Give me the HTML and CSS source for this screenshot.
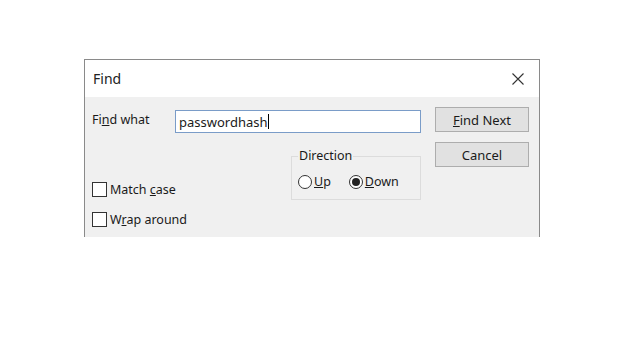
FILE: index.html
```html
<!DOCTYPE html>
<html>
<head>
<meta charset="utf-8">
<link rel="stylesheet" href="styles.css">
</head>
<body>
<div class="dialog">
  <div class="titlebar">
    <span class="title">Find</span>
    <svg class="close" width="12" height="12" viewBox="0 0 12 12"><path d="M0.5 0.5 L11.5 11.5 M11.5 0.5 L0.5 11.5" stroke="#333" stroke-width="1.1" fill="none"/></svg>
  </div>
  <div class="content">
    <div class="left">
      <div class="findrow">
        <label class="findlabel">Fi<u>n</u>d what</label>
        <div class="input"><span>passwordhash</span><span class="caret"></span></div>
      </div>
      <div class="lower">
        <div class="checks">
          <div class="check"><span class="box"></span><span>Match <u>c</u>ase</span></div>
          <div class="check"><span class="box"></span><span>W<u>r</u>ap around</span></div>
        </div>
        <fieldset class="group">
          <legend>Direction</legend>
          <div class="radios">
            <div class="radio"><span class="circle"></span><span><u>U</u>p</span></div>
            <div class="radio"><span class="circle on"></span><span><u>D</u>own</span></div>
          </div>
        </fieldset>
      </div>
    </div>
    <div class="buttons">
      <div class="btn"><u>F</u>ind Next</div>
      <div class="btn">Cancel</div>
    </div>
  </div>
</div>
</body>
</html>
```

FILE: styles.css
```css
html, body {
  margin: 0;
  padding: 0;
  background: #fff;
}
body {
  font-family: "Noto Sans", "Open Sans", sans-serif;
  font-size: 12.5px;
  color: #1a1a1a;
}
.dialog {
  margin: 59px 0 0 84px;
  width: 454px;
  border: 1px solid #8a8a8a;
  border-bottom: none;
}
.titlebar {
  height: 37px;
  background: #fff;
  display: flex;
  align-items: center;
  justify-content: space-between;
  padding: 0 15px 0 8px;
}
.title {
  font-size: 14px;
  color: #222;
}
.close {
  display: block;
}
.content {
  height: 140px;
  background: #f0f0f0;
  box-sizing: border-box;
  padding: 10px 0 0 7px;
  display: flex;
  gap: 14px;
  overflow: hidden;
}
.left {
  width: 329px;
}
.findrow {
  display: flex;
  align-items: flex-start;
  height: 26px;
}
.findlabel {
  width: 83px;
  line-height: 26px;
}
.input {
  margin-top: 3px;
  width: 246px;
  height: 23px;
  box-sizing: border-box;
  border: 1px solid #7a9cc8;
  background: #fff;
  display: flex;
  align-items: center;
  padding-left: 3px;
  font-size: 13px;
}
.caret {
  width: 1px;
  height: 15px;
  background: #000;
}
.lower {
  display: flex;
  align-items: flex-start;
}
.checks {
  margin-top: 49px;
  display: flex;
  flex-direction: column;
  gap: 15px;
}
.check {
  display: flex;
  align-items: center;
  gap: 3px;
  height: 15px;
}
.box {
  width: 15px;
  height: 15px;
  box-sizing: border-box;
  border: 1px solid #333;
  background: #fff;
}
.group {
  margin: 16px 0 0 auto;
  width: 130px;
  height: 51px;
  box-sizing: border-box;
  border: 1px solid #dcdcdc;
  padding: 0 0 0 6px;
  min-width: 0;
}
.group legend {
  padding: 0 1px;
  margin-left: 0;
  line-height: 14px;
}
.radios {
  display: flex;
  gap: 18px;
  margin-top: 10px;
}
.radio {
  display: flex;
  align-items: center;
  gap: 2px;
}
.circle {
  width: 14px;
  height: 14px;
  box-sizing: border-box;
  border: 1px solid #333;
  border-radius: 50%;
  background: #fff;
  position: relative;
}
.circle.on::after {
  content: "";
  position: absolute;
  left: 2px;
  top: 2px;
  width: 8px;
  height: 8px;
  border-radius: 50%;
  background: #222;
}
.buttons {
  width: 94px;
  display: flex;
  flex-direction: column;
  gap: 10px;
}
.btn {
  height: 25px;
  box-sizing: border-box;
  border: 1px solid #adadad;
  background: #e1e1e1;
  display: flex;
  align-items: center;
  justify-content: center;
  font-size: 13px;
}
```
